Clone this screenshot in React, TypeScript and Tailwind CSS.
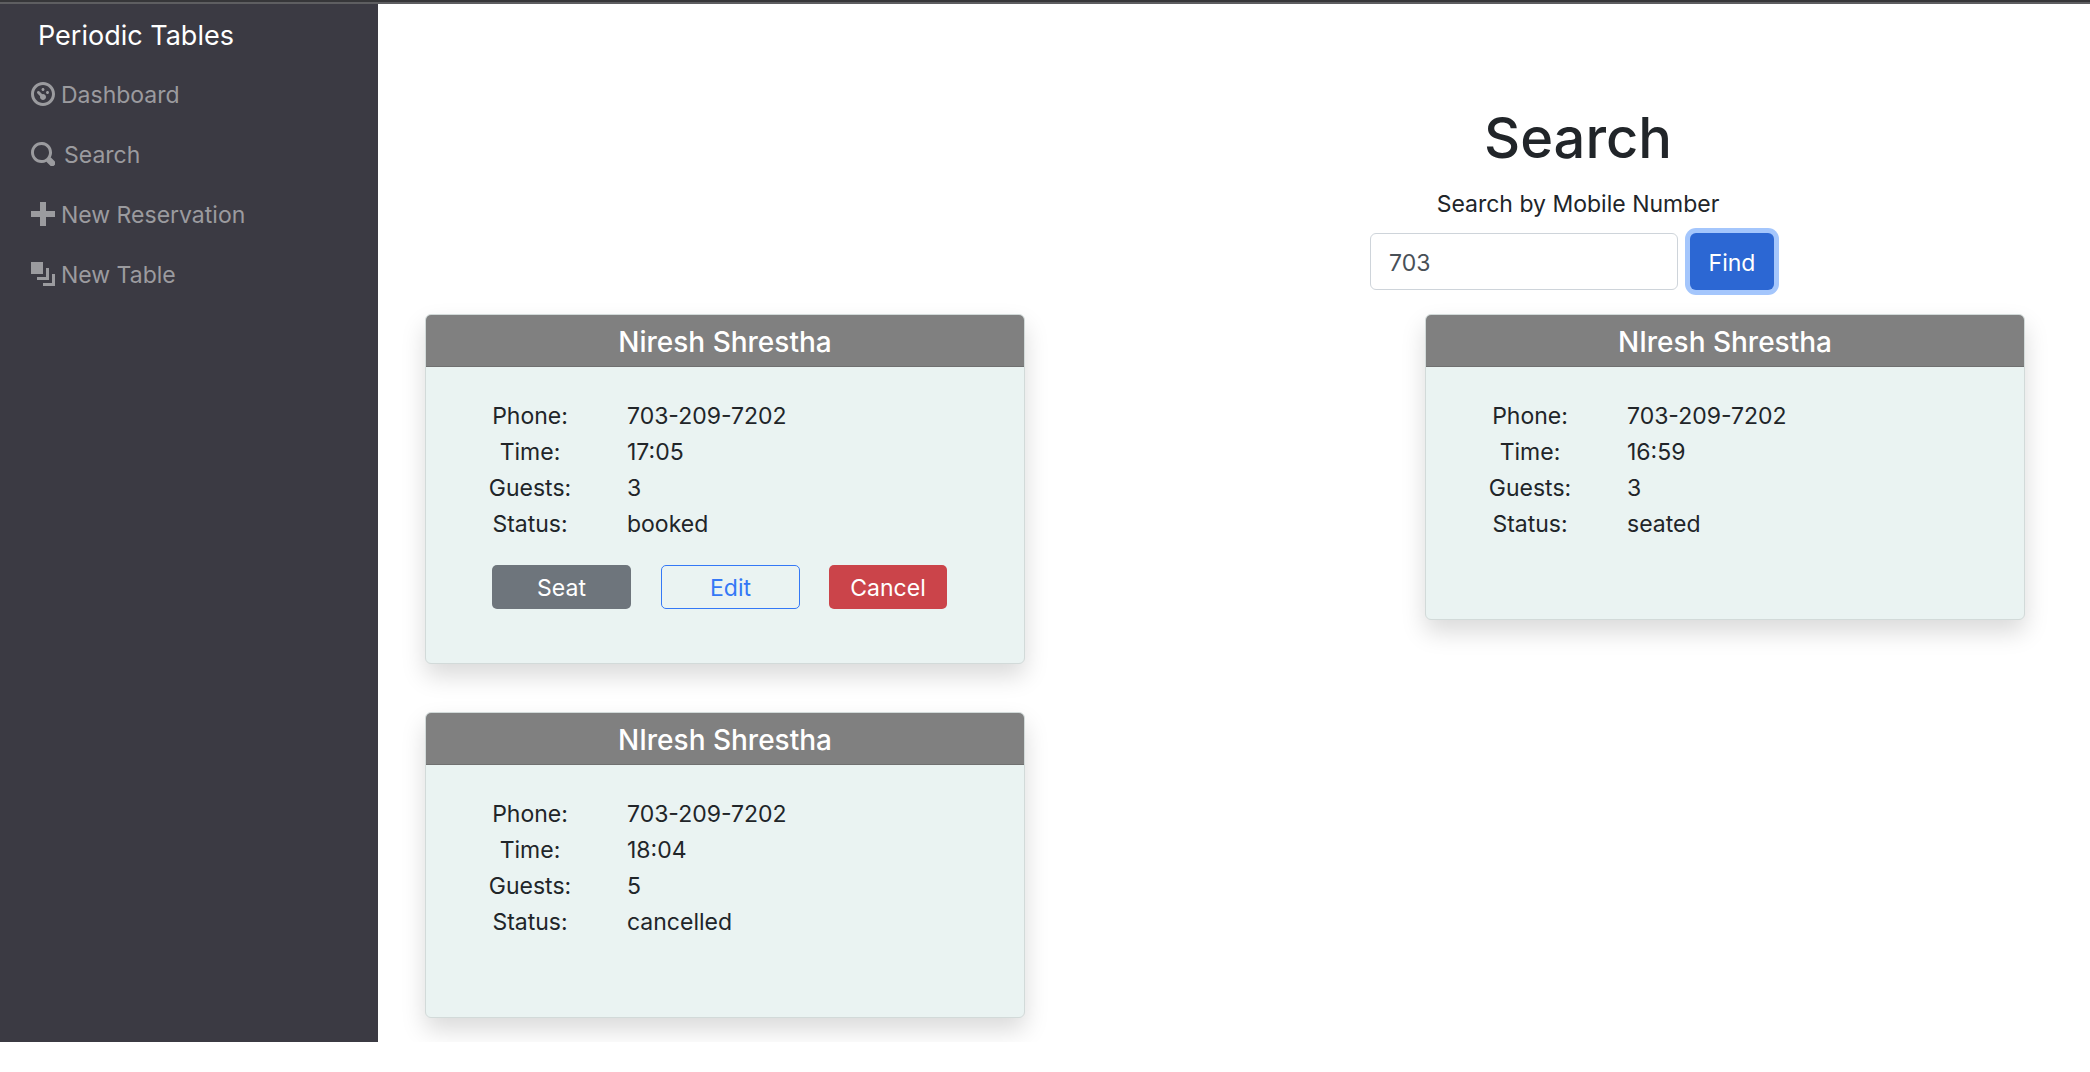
import { useState } from "react";

type Reservation = {
  id: number;
  name: string;
  phone: string;
  time: string;
  guests: number;
  status: string;
};

const reservations: Reservation[] = [
  { id: 1, name: "Niresh Shrestha", phone: "703-209-7202", time: "17:05", guests: 3, status: "booked" },
  { id: 2, name: "NIresh Shrestha", phone: "703-209-7202", time: "16:59", guests: 3, status: "seated" },
  { id: 3, name: "NIresh Shrestha", phone: "703-209-7202", time: "18:04", guests: 5, status: "cancelled" },
];

const links = [
  {
    label: "Dashboard",
    gap: "gap-[6px]",
    path: "M4 0c-2.2 0-4 1.8-4 4s1.8 4 4 4 4-1.8 4-4-1.8-4-4-4zm0 1c1.66 0 3 1.34 3 3s-1.34 3-3 3-3-1.34-3-3 1.34-3 3-3zm0 1c-.28 0-.5.22-.5.5s.22.5.5.5.5-.22.5-.5-.22-.5-.5-.5zm-1.66 1a.5.5 0 0 0-.19.84l.91.91c-.02.08-.06.16-.06.25 0 .55.45 1 1 1s1-.45 1-1-.45-1-1-1c-.09 0-.17.04-.25.06l-.91-.91a.5.5 0 0 0-.44-.16.5.5 0 0 0-.06 0zm3.16 0c-.28 0-.5.22-.5.5s.22.5.5.5.5-.22.5-.5-.22-.5-.5-.5z",
  },
  {
    label: "Search",
    gap: "gap-[9px]",
    path: "M3.5 0c-1.93 0-3.5 1.57-3.5 3.5s1.57 3.5 3.5 3.5c.59 0 1.17-.14 1.66-.41a1 1 0 0 0 .13.13l1 1a1.02 1.02 0 1 0 1.44-1.44l-1-1a1 1 0 0 0-.16-.13c.27-.49.44-1.06.44-1.66 0-1.93-1.55-3.5-3.5-3.5zm0 1c1.39 0 2.5 1.11 2.5 2.5 0 .66-.24 1.27-.66 1.72-.01.01-.02.02-.03.03a1 1 0 0 0-.13.13c-.44.4-1.04.63-1.69.63-1.39 0-2.5-1.11-2.5-2.5s1.11-2.5 2.5-2.5z",
  },
  { label: "New Reservation", gap: "gap-[6px]", path: "M3 0v3h-3v2h3v3h2v-3h3v-2h-3v-3h-2z" },
  {
    label: "New Table",
    gap: "gap-[6px]",
    path: "M0 0v4h4v-4h-4zm5 2v3h-3v1h4v-4h-1zm2 2v3h-3v1h4v-4h-1z",
  },
];

function Sidebar() {
  return (
    <nav className="w-[378px] shrink-0 bg-[#3b3a43]">
      <a href="#" className="flex h-15 items-center pt-0.5 pl-[38px] text-[27px] leading-none text-white">
        Periodic Tables
      </a>
      <ul>
        {links.map((link) => (
          <li key={link.label}>
            <a href="#" className={`flex h-15 items-center pl-[31px] text-[#9b9b9f] ${link.gap}`}>
              <svg viewBox="0 0 8 8" className="size-6 fill-current" aria-hidden="true">
                <path d={link.path} />
              </svg>
              <span className="pt-0.5">{link.label}</span>
            </a>
          </li>
        ))}
      </ul>
    </nav>
  );
}

function ReservationCard({ reservation }: { reservation: Reservation }) {
  const rows = [
    ["Phone:", reservation.phone],
    ["Time:", reservation.time],
    ["Guests:", reservation.guests],
    ["Status:", reservation.status],
  ];
  return (
    <article className="w-[600px] overflow-hidden rounded-[6px] border border-[#d2dad9] bg-[#eaf3f2] shadow-[0_12px_24px_rgba(0,0,0,0.15)]">
      <h2 className="flex h-13 items-center justify-center border-b border-[#707070] bg-[#808080] pt-0.5 text-[28px] leading-none font-medium text-white">
        {reservation.name}
      </h2>
      <div className="pt-[31px] pb-[54px] pl-[54px]">
        <table>
          <tbody>
            {rows.map(([label, value]) => (
              <tr key={label}>
                <th scope="row" className="w-[100px] p-0 text-center font-normal">
                  {label}
                </th>
                <td className="py-0 pr-0 pl-[47px]">{value}</td>
              </tr>
            ))}
          </tbody>
        </table>
        <div className="flex pt-[23px] pl-3 leading-none">
          {reservation.status === "booked" && (
            <>
              <button className="mr-[30px] h-11 w-[139px] rounded-[5px] bg-[#6e757c] pt-0.5 text-white">Seat</button>
              <button className="mr-[29px] h-11 w-[139px] rounded-[5px] border border-[#3478f6] pt-0.5 text-[#3478f6]">
                Edit
              </button>
              <button className="h-11 w-[118px] rounded-[5px] bg-[#cb444a] pt-0.5 text-white">Cancel</button>
            </>
          )}
        </div>
      </div>
    </article>
  );
}

export default function App() {
  const [mobile, setMobile] = useState("703");
  return (
    <div className="border-t-2 border-[#363639] bg-white font-['Inter',sans-serif] text-[23px] leading-9 text-[#212529]">
      <div className="border-t-2 border-[#5e5e61]">
        <div className="flex">
          <Sidebar />
          <main className="flex min-w-0 flex-1 flex-col pt-[98px] pb-6">
            <form
              className="flex w-[1024px] max-w-full flex-col items-center self-end"
              onSubmit={(event) => event.preventDefault()}
            >
              <h1 className="text-[56px] leading-[72px] font-medium">Search</h1>
              <label htmlFor="mobile" className="pt-3 pb-[11px]">
                Search by Mobile Number
              </label>
              <div className="flex gap-3 pr-3">
                <input
                  id="mobile"
                  type="text"
                  value={mobile}
                  onChange={(event) => setMobile(event.target.value)}
                  className="h-[57px] w-[308px] rounded-[6px] border border-[#ced4da] px-[18px] pt-0.5 text-[#495057] outline-none"
                />
                <button className="h-[57px] w-[84px] rounded-[6px] bg-[#2c67d3] pt-0.5 text-white shadow-[0_0_0_5px_#a4c6fc]">
                  Find
                </button>
              </div>
            </form>
            <section className="mt-6 flex flex-wrap items-start justify-between gap-y-12 pr-[65px] pl-[47px]">
              {reservations.map((reservation) => (
                <ReservationCard key={reservation.id} reservation={reservation} />
              ))}
            </section>
          </main>
        </div>
      </div>
    </div>
  );
}
